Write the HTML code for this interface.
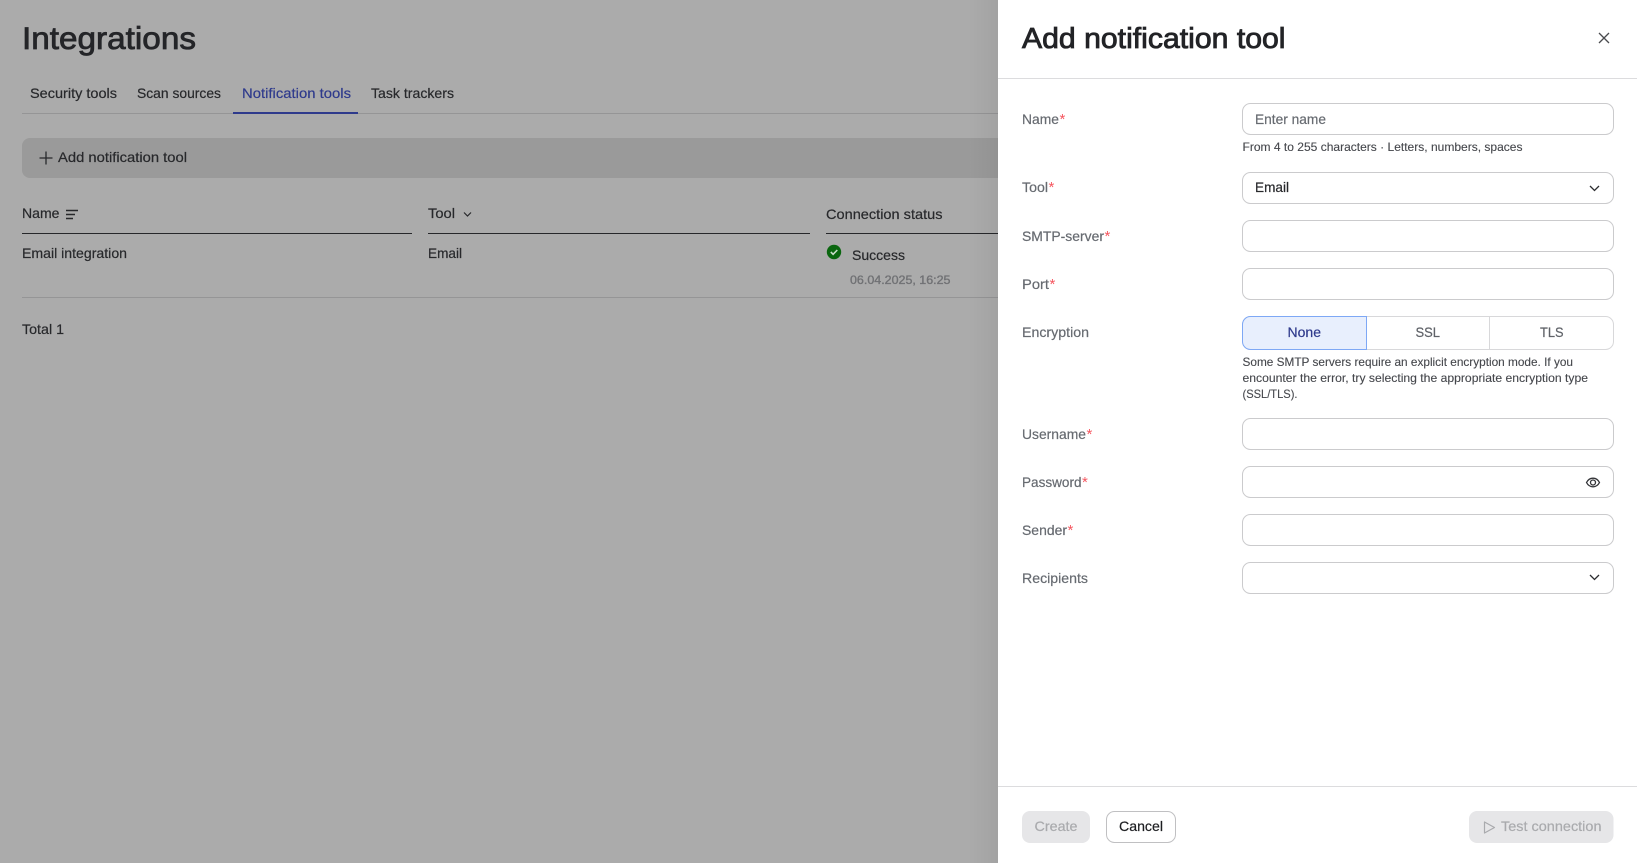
<!DOCTYPE html>
<html lang="en">
<head>
<meta charset="utf-8">
<title>Add notification tool</title>
<style>
html,body{margin:0;padding:0;width:1637px;height:863px;overflow:hidden;background:#ababab}
svg{display:block;position:absolute;left:0;top:0}
text{font-family:"Liberation Sans",sans-serif;font-size:14px;stroke-width:.2;paint-order:stroke}
.d{fill:#27282b;stroke:#27282b}
.t{font-size:31.5px;fill:#242528;stroke:#242528;stroke-width:.8}
.h{font-size:29px;fill:#222326;stroke:#222326;stroke-width:.85}
.l{fill:#666a70;stroke:#666a70}
.s{fill:#f5565f;font-size:15px}
.n{font-size:12px;fill:#45474c;stroke:#45474c;stroke-width:.12}
.i{fill:none;stroke:#cbcbcd;stroke-width:1}
</style>
</head>
<body>
<svg width="1637" height="863" viewBox="0 0 1637 863" xmlns="http://www.w3.org/2000/svg">
<defs>
<linearGradient id="sh" x1="0" x2="1" y1="0" y2="0">
<stop offset="0" stop-color="#000" stop-opacity="0"/>
<stop offset="1" stop-color="#000" stop-opacity=".05"/>
</linearGradient>
</defs>

<!-- page behind scrim -->
<rect width="1637" height="863" fill="#ababab"/>
<text class="t" x="22" y="49" textLength="174" lengthAdjust="spacingAndGlyphs">Integrations</text>

<rect x="22" y="113" width="976" height="1" fill="#959596"/>
<text class="d" x="30" y="98" textLength="87" lengthAdjust="spacingAndGlyphs">Security tools</text>
<text class="d" x="137" y="98" textLength="84" lengthAdjust="spacingAndGlyphs">Scan sources</text>
<text x="242" y="98" fill="#2e3a8c" stroke="#2e3a8c" textLength="109" lengthAdjust="spacingAndGlyphs">Notification tools</text>
<text class="d" x="371" y="98" textLength="83" lengthAdjust="spacingAndGlyphs">Task trackers</text>
<rect x="233" y="112" width="125" height="2" fill="#2e3a8c"/>

<path d="M30 138h968v40H30a8 8 0 0 1-8-8v-24a8 8 0 0 1 8-8z" fill="#9a9a9a"/>
<path d="M46 151.500v13M39.500 158h13" stroke="#27282b" stroke-width="1.300" fill="none"/>
<text class="d" x="58" y="162" textLength="129" lengthAdjust="spacingAndGlyphs">Add notification tool</text>

<text class="d" x="22" y="218" textLength="37.500" lengthAdjust="spacingAndGlyphs">Name</text>
<path d="M66 210.500h12M66 214.500h9M66 218.500h7" stroke="#27282b" stroke-width="1.400" fill="none"/>
<text class="d" x="428" y="218" textLength="27" lengthAdjust="spacingAndGlyphs">Tool</text>
<path d="M464 212.500l3.500 3.500 3.500-3.500" stroke="#27282b" stroke-width="1.200" fill="none"/>
<text class="d" x="826" y="219" textLength="116.500" lengthAdjust="spacingAndGlyphs">Connection status</text>
<rect x="22" y="233" width="390" height="1" fill="#26272a"/>
<rect x="428" y="233" width="382" height="1" fill="#26272a"/>
<rect x="826" y="233" width="172" height="1" fill="#26272a"/>

<text class="d" x="22" y="258" textLength="105" lengthAdjust="spacingAndGlyphs">Email integration</text>
<text class="d" x="428" y="258" textLength="34" lengthAdjust="spacingAndGlyphs">Email</text>
<circle cx="834" cy="252" r="7.200" fill="#0a660f"/>
<path d="M830.800 252l2.300 2.300 4.200-4.300" stroke="#c8dcc8" stroke-width="1.600" fill="none"/>
<text class="d" x="852" y="260" textLength="53" lengthAdjust="spacingAndGlyphs">Success</text>
<text x="850" y="284" fill="#707174" stroke="#707174" style="font-size:12px;stroke-width:.35" textLength="100.500" lengthAdjust="spacingAndGlyphs">06.04.2025, 16:25</text>
<rect x="22" y="297" width="976" height="1" fill="#959596"/>
<text class="d" x="22" y="334" textLength="42" lengthAdjust="spacingAndGlyphs">Total 1</text>

<rect x="968" y="0" width="30" height="863" fill="url(#sh)"/>

<!-- drawer -->
<rect x="998" y="0" width="639" height="863" fill="#fff"/>
<text class="h" x="1022" y="48" textLength="263.500" lengthAdjust="spacingAndGlyphs">Add notification tool</text>
<path d="M1599 33l10 10M1609 33l-10 10" stroke="#4a4b4f" stroke-width="1.300" fill="none"/>
<rect x="998" y="78" width="639" height="1" fill="#dcdcde"/>

<text class="l" x="1022" y="124" textLength="37" lengthAdjust="spacingAndGlyphs">Name</text>
<text class="s" x="1059.500" y="124">*</text>
<rect class="i" x="1242.500" y="103.500" width="371" height="31" rx="8"/>
<text class="l" x="1255" y="124" textLength="71" lengthAdjust="spacingAndGlyphs">Enter name</text>
<text class="n" x="1242.500" y="151" textLength="280" lengthAdjust="spacingAndGlyphs">From 4 to 255 characters · Letters, numbers, spaces</text>

<text class="l" x="1022" y="192" textLength="26" lengthAdjust="spacingAndGlyphs">Tool</text>
<text class="s" x="1048.500" y="192">*</text>
<rect class="i" x="1242.500" y="172.500" width="371" height="31" rx="8"/>
<text class="d" x="1255" y="192" textLength="34" lengthAdjust="spacingAndGlyphs">Email</text>
<path d="M1590 186l4.500 4.500 4.500-4.500" stroke="#2c2d30" stroke-width="1.300" fill="none"/>

<text class="l" x="1022" y="241" textLength="82" lengthAdjust="spacingAndGlyphs">SMTP-server</text>
<text class="s" x="1104.500" y="241">*</text>
<rect class="i" x="1242.500" y="220.500" width="371" height="31" rx="8"/>

<text class="l" x="1022" y="289" textLength="27" lengthAdjust="spacingAndGlyphs">Port</text>
<text class="s" x="1049.500" y="289">*</text>
<rect class="i" x="1242.500" y="268.500" width="371" height="31" rx="8"/>

<text class="l" x="1022" y="337" textLength="67" lengthAdjust="spacingAndGlyphs">Encryption</text>
<rect x="1242.500" y="316.500" width="371" height="33" rx="8" fill="#fff" stroke="#d8d8da"/>
<rect x="1489" y="317" width="1" height="32" fill="#d8d8da"/>
<path d="M1366.500 316.500H1250.500a8 8 0 0 0-8 8v17a8 8 0 0 0 8 8H1366.500z" fill="#e8effd" stroke="#7ea8f5"/>
<text x="1287.500" y="337" fill="#2e3a8c" stroke="#2e3a8c" textLength="33.500" lengthAdjust="spacingAndGlyphs">None</text>
<text x="1415.500" y="337" fill="#5f6268" stroke="#5f6268" textLength="24.500" lengthAdjust="spacingAndGlyphs">SSL</text>
<text x="1540" y="337" fill="#5f6268" stroke="#5f6268" textLength="23.500" lengthAdjust="spacingAndGlyphs">TLS</text>
<text class="n" x="1242.500" y="366" textLength="330.500" lengthAdjust="spacingAndGlyphs">Some SMTP servers require an explicit encryption mode. If you</text>
<text class="n" x="1242.500" y="382" textLength="345.500" lengthAdjust="spacingAndGlyphs">encounter the error, try selecting the appropriate encryption type</text>
<text class="n" x="1242.500" y="398" textLength="55" lengthAdjust="spacingAndGlyphs">(SSL/TLS).</text>

<text class="l" x="1022" y="439" textLength="64" lengthAdjust="spacingAndGlyphs">Username</text>
<text class="s" x="1086.500" y="439">*</text>
<rect class="i" x="1242.500" y="418.500" width="371" height="31" rx="8"/>

<text class="l" x="1022" y="487" textLength="59.500" lengthAdjust="spacingAndGlyphs">Password</text>
<text class="s" x="1082" y="487">*</text>
<rect class="i" x="1242.500" y="466.500" width="371" height="31" rx="8"/>
<path d="M1586.500 482.500c1.600-3 3.800-4.300 6.500-4.300s4.900 1.300 6.500 4.300c-1.600 3-3.800 4.300-6.500 4.300s-4.900-1.300-6.500-4.300z" fill="none" stroke="#333438" stroke-width="1.300"/>
<circle cx="1593" cy="482.500" r="2.500" fill="none" stroke="#333438" stroke-width="1.300"/>

<text class="l" x="1022" y="535" textLength="45" lengthAdjust="spacingAndGlyphs">Sender</text>
<text class="s" x="1067.500" y="535">*</text>
<rect class="i" x="1242.500" y="514.500" width="371" height="31" rx="8"/>

<text class="l" x="1022" y="583" textLength="66" lengthAdjust="spacingAndGlyphs">Recipients</text>
<rect class="i" x="1242.500" y="562.500" width="371" height="31" rx="8"/>
<path d="M1590 575l4.500 4.500 4.500-4.500" stroke="#2c2d30" stroke-width="1.300" fill="none"/>

<!-- footer -->
<rect x="998" y="786" width="639" height="1" fill="#dcdcde"/>
<rect x="1022" y="811" width="68" height="32" rx="8" fill="#e6e6e8"/>
<text x="1034.500" y="831" fill="#a9aaad" stroke="#a9aaad" textLength="43" lengthAdjust="spacingAndGlyphs">Create</text>
<rect x="1106.500" y="811.500" width="69" height="31" rx="8" fill="#fff" stroke="#c0c0c2"/>
<text x="1119" y="831" fill="#1d1e21" stroke="#1d1e21" textLength="44" lengthAdjust="spacingAndGlyphs">Cancel</text>
<rect x="1469" y="811" width="144.500" height="32" rx="8" fill="#e6e6e8"/>
<path d="M1484.500 822l10 5.500-10 5.500z" fill="none" stroke="#a9aaad" stroke-width="1.200" stroke-linejoin="round"/>
<text x="1501" y="831" fill="#a9aaad" stroke="#a9aaad" textLength="100.500" lengthAdjust="spacingAndGlyphs">Test connection</text>
</svg>
</body>
</html>
